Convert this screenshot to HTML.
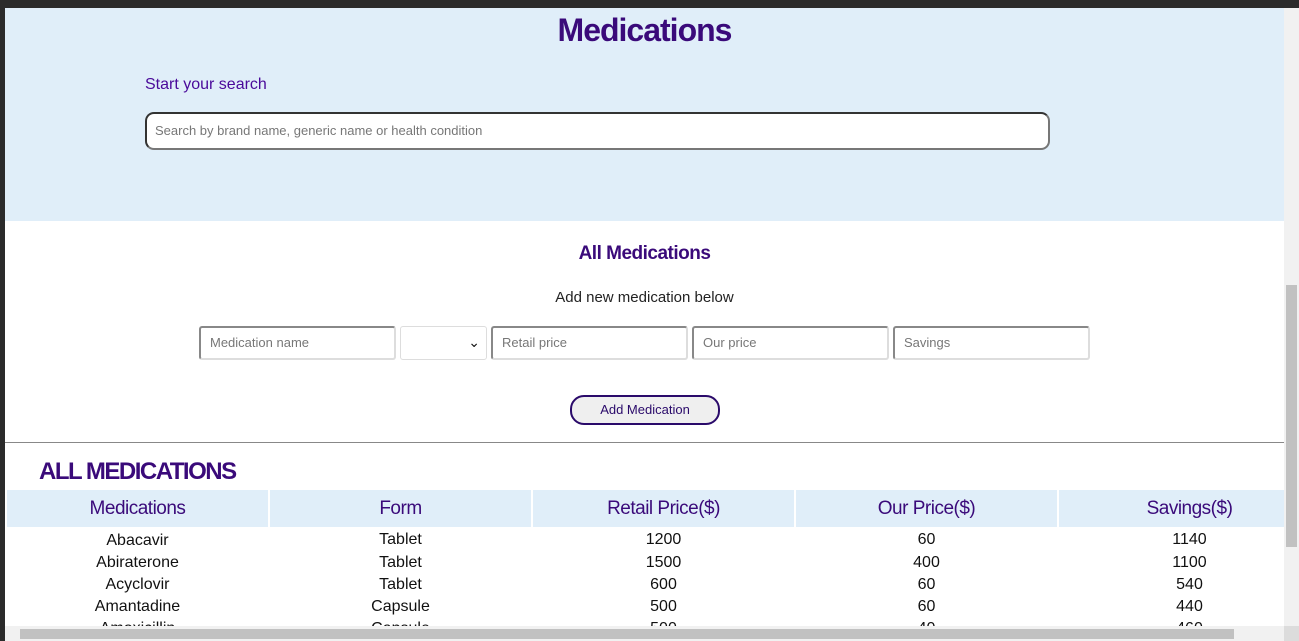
<!DOCTYPE html>
<html><head><style>
body{margin:0;width:1299px;height:641px;overflow:hidden;background:#2b2b2b;font-family:"Liberation Sans",sans-serif;position:relative}
.page{position:absolute;left:5px;top:8px;width:1279px;height:618px;background:#fff;overflow:hidden}
.hero{position:absolute;left:0;top:0;width:1279px;height:213px;background:#e0eef9}
h1{position:absolute;left:0;width:1279px;top:4px;margin:0;text-align:center;color:#3a0a7a;font-size:32px;font-weight:bold;letter-spacing:-1px}
.ss{position:absolute;left:140px;top:68px;color:#4a0a9a;font-size:16px}
.search{position:absolute;left:140px;top:104px;width:893px;height:34px;border:2px solid #333;border-bottom-color:#777;border-right-color:#777;border-radius:9px;background:#fff;font-size:13px;color:#777;line-height:34px;padding-left:8px;box-sizing:content-box}
.am{position:absolute;left:0;width:1279px;top:235px;text-align:center;color:#3a0a7a;font-size:19px;font-weight:bold;letter-spacing:-.5px}
.an{position:absolute;left:0;width:1279px;top:281px;text-align:center;color:#222;font-size:15px}
.in{position:absolute;top:318px;height:34px;border:2px solid #888;border-right-color:#ddd;border-bottom-color:#ddd;border-radius:3px;box-sizing:border-box;font-size:13px;color:#777;line-height:30px;padding-left:9px;background:#fff}
.btn{position:absolute;left:565px;top:387px;width:146px;height:26px;border:2px solid #2a0a6a;border-radius:14px;background:#efefef;text-align:center;line-height:26px;font-size:13px;color:#2a0a6a}
.hr{position:absolute;left:0;top:434px;width:1279px;height:1px;background:#888}
.big{position:absolute;left:34px;top:450px;color:#3a0a7a;font-size:24px;font-weight:bold;letter-spacing:-1.5px}
table{position:absolute;left:0px;top:482px;border-collapse:separate;border-spacing:2px 0;width:1317px;table-layout:fixed}
th{background:#e0eef9;color:#3a0a7a;font-size:19px;font-weight:normal;height:37px;letter-spacing:-.5px;padding:0}
td{text-align:center;font-size:16px;height:22px;color:#111;padding:0}
.vs{position:absolute;left:1284px;top:8px;width:15px;height:618px;background:#f1f1f1}
.vt{position:absolute;left:1286px;top:285px;width:11px;height:262px;background:#c1c1c1}
.hs{position:absolute;left:5px;top:626px;width:1279px;height:15px;background:#f1f1f1}
.ht{position:absolute;left:20px;top:629px;width:1214px;height:10px;background:#c1c1c1}
.corner{position:absolute;left:1284px;top:626px;width:15px;height:15px;background:#dcdcdc}
</style></head><body>
<div class="page">
<div class="hero"><h1>Medications</h1><div class="ss">Start your search</div><div class="search">Search by brand name, generic name or health condition</div></div>
<div class="am">All Medications</div>
<div class="an">Add new medication below</div>
<div class="in" style="left:194px;width:197px">Medication name</div>
<div class="in" style="left:395px;width:87px;border:1px solid #ddd;font-size:14px;color:#111;text-align:right;padding-right:6px">&#8964;</div>
<div class="in" style="left:486px;width:197px">Retail price</div>
<div class="in" style="left:687px;width:197px">Our price</div>
<div class="in" style="left:888px;width:197px">Savings</div>
<div class="btn">Add Medication</div>
<div class="hr"></div>
<div class="big">ALL MEDICATIONS</div>
<table>
<tr><th>Medications</th><th>Form</th><th>Retail Price($)</th><th>Our Price($)</th><th>Savings($)</th></tr>
<tr><td style="padding-top:3px">Abacavir</td><td>Tablet</td><td>1200</td><td>60</td><td>1140</td></tr>
<tr><td>Abiraterone</td><td>Tablet</td><td>1500</td><td>400</td><td>1100</td></tr>
<tr><td>Acyclovir</td><td>Tablet</td><td>600</td><td>60</td><td>540</td></tr>
<tr><td>Amantadine</td><td>Capsule</td><td>500</td><td>60</td><td>440</td></tr>
<tr><td>Amoxicillin</td><td>Capsule</td><td>500</td><td>40</td><td>460</td></tr>
</table>
</div>
<div class="vs"></div><div class="vt"></div>
<div class="hs"></div><div class="ht"></div><div class="corner"></div>
</body></html>
